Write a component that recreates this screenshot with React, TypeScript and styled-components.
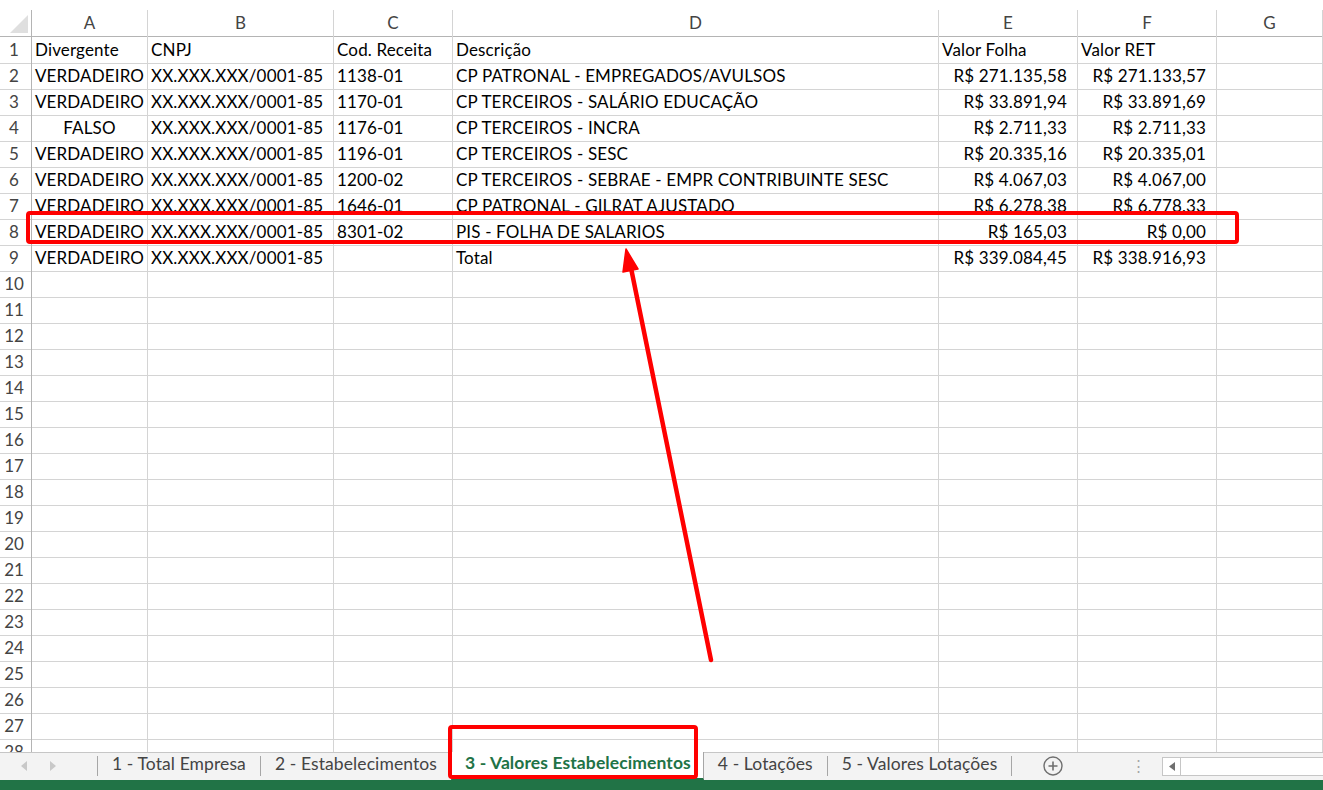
import React from "react";
import styled, { createGlobalStyle } from "styled-components";

const Global = createGlobalStyle`
  html, body { margin: 0; padding: 0; background: #ffffff; overflow: hidden; }
  body { font-family: "Lato", "Liberation Sans", sans-serif; }
  * { box-sizing: border-box; }
`;

const COLS = "32px 116px 186px 119px 486px 139px 139px 1fr";
const GRID = "#d4d4d4";
const HEADLINE = "#b4b4b4";

const Page = styled.div`
  position: relative;
  width: 1323px;
  height: 790px;
  display: flex;
  flex-direction: column;
  padding-top: 10px;
  overflow: hidden;
`;

const Sheet = styled.div`
  flex: 1;
  overflow: hidden;
  display: flex;
  flex-direction: column;
`;

const Row = styled.div`
  display: grid;
  grid-template-columns: ${COLS};
  height: 26px;
  flex: none;
`;

const Corner = styled.div`
  position: relative;
  border-right: 1px solid ${HEADLINE};
  border-bottom: 1px solid ${HEADLINE};
  &::after {
    content: "";
    position: absolute;
    right: 3px;
    bottom: 3px;
    width: 0;
    height: 0;
    border-left: 18px solid transparent;
    border-bottom: 18px solid #dfdfdf;
  }
`;

const ColHead = styled.div`
  border-right: 1px solid ${GRID};
  border-bottom: 1px solid ${HEADLINE};
  color: #444444;
  font-size: 17px;
  line-height: 26px;
  text-align: center;
`;

const RowHead = styled.div`
  border-right: 1px solid ${HEADLINE};
  border-bottom: 1px solid ${GRID};
  color: #444444;
  font-size: 17px;
  line-height: 26px;
  padding-top: 1px;
  text-align: center;
  padding-right: 3px;
`;

const Cell = styled.div<{ $align?: "left" | "center" | "right" }>`
  border-right: 1px solid ${GRID};
  border-bottom: 1px solid ${GRID};
  color: #000000;
  font-size: 17px;
  letter-spacing: 0.15px;
  line-height: 26px;
  padding-top: 1px;
  white-space: nowrap;
  overflow: visible;
  text-align: ${(p) => p.$align ?? "left"};
  padding-left: ${(p) => (p.$align === "left" || !p.$align ? "3px" : "0")};
  padding-right: ${(p) => (p.$align === "right" ? "10px" : "0")};
`;

const TabBar = styled.div`
  height: 28px;
  flex: none;
  background: #f3f3f3;
  border-top: 1px solid #c6c6c6;
  display: flex;
  align-items: stretch;
`;

const Nav = styled.div`
  width: 97px;
  display: flex;
  align-items: center;
  gap: 21px;
  padding-left: 21px;
  padding-bottom: 2px;
`;

const Sep = styled.div`
  width: 1px;
  background: #a6a6a6;
  margin: 3px 0 4px;
`;

const Tab = styled.div<{ $active?: boolean }>`
  display: flex;
  align-items: center;
  padding: ${(p) => (p.$active ? "0 12px 5px 13px" : "0 14px 6px")};
  font-size: 17.5px;
  letter-spacing: 0.1px;
  color: ${(p) => (p.$active ? "#217346" : "#444444")};
  font-weight: ${(p) => (p.$active ? 700 : 400)};
  background: ${(p) => (p.$active ? "#ffffff" : "transparent")};
  border-left: ${(p) => (p.$active ? "1px solid #a6a6a6" : "none")};
  border-right: ${(p) => (p.$active ? "1px solid #a6a6a6" : "none")};
  border-bottom: ${(p) => (p.$active ? "2px solid #217346" : "none")};
  margin-top: -1px;
  white-space: nowrap;
`;

const AddArea = styled.div`
  width: 82px;
  display: flex;
  align-items: center;
  justify-content: center;
  padding-bottom: 2px;
`;

const Dots = styled.div`
  width: 68px;
  display: flex;
  align-items: center;
  justify-content: flex-end;
  padding-right: 16px;
  padding-bottom: 2px;
  color: #a6a6a6;
  font-size: 15px;
`;

const Scroll = styled.div`
  flex: 1;
  margin: 4px 0 4px 0;
  display: flex;
  border: 1px solid #c6c6c6;
  border-right: none;
  background: #ffffff;
`;

const ScrollArrow = styled.div`
  width: 18px;
  border-right: 1px solid #c6c6c6;
  display: flex;
  align-items: center;
  justify-content: center;
`;

const Status = styled.div`
  height: 10px;
  flex: none;
  background: #217346;
`;

const Overlay = styled.svg`
  position: absolute;
  left: 0;
  top: 0;
  pointer-events: none;
`;

type R = [string, string, string, string, string, string];
const rows: R[] = [
  ["Divergente", "CNPJ", "Cod. Receita", "Descrição", "Valor Folha", "Valor RET"],
  ["VERDADEIRO", "XX.XXX.XXX/0001-85", "1138-01", "CP PATRONAL - EMPREGADOS/AVULSOS", "R$ 271.135,58", "R$ 271.133,57"],
  ["VERDADEIRO", "XX.XXX.XXX/0001-85", "1170-01", "CP TERCEIROS - SALÁRIO EDUCAÇÃO", "R$ 33.891,94", "R$ 33.891,69"],
  ["FALSO", "XX.XXX.XXX/0001-85", "1176-01", "CP TERCEIROS - INCRA", "R$ 2.711,33", "R$ 2.711,33"],
  ["VERDADEIRO", "XX.XXX.XXX/0001-85", "1196-01", "CP TERCEIROS - SESC", "R$ 20.335,16", "R$ 20.335,01"],
  ["VERDADEIRO", "XX.XXX.XXX/0001-85", "1200-02", "CP TERCEIROS - SEBRAE - EMPR CONTRIBUINTE SESC", "R$ 4.067,03", "R$ 4.067,00"],
  ["VERDADEIRO", "XX.XXX.XXX/0001-85", "1646-01", "CP PATRONAL - GILRAT AJUSTADO", "R$ 6.278,38", "R$ 6.778,33"],
  ["VERDADEIRO", "XX.XXX.XXX/0001-85", "8301-02", "PIS - FOLHA DE SALARIOS", "R$ 165,03", "R$ 0,00"],
  ["VERDADEIRO", "XX.XXX.XXX/0001-85", "", "Total", "R$ 339.084,45", "R$ 338.916,93"],
];

const letters = ["A", "B", "C", "D", "E", "F", "G"];

export default function App() {
  const total = 28;
  return (
    <>
      <Global />
      <Page>
        <Sheet>
          <Row>
            <Corner />
            {letters.map((l) => (
              <ColHead key={l}>{l}</ColHead>
            ))}
          </Row>
          {Array.from({ length: total }, (_, i) => {
            const d = rows[i];
            const header = i === 0;
            return (
              <Row key={i}>
                <RowHead>{i + 1}</RowHead>
                <Cell $align={d && !header ? "center" : "left"}>{d ? d[0] : ""}</Cell>
                <Cell>{d ? d[1] : ""}</Cell>
                <Cell>{d ? d[2] : ""}</Cell>
                <Cell>{d ? d[3] : ""}</Cell>
                <Cell $align={d && !header ? "right" : "left"}>{d ? d[4] : ""}</Cell>
                <Cell $align={d && !header ? "right" : "left"}>{d ? d[5] : ""}</Cell>
                <Cell />
              </Row>
            );
          })}
        </Sheet>
        <TabBar>
          <Nav>
            <svg width="7" height="10" viewBox="0 0 7 10"><path d="M6 0 L0 5 L6 10 Z" fill="#c8c8c8" /></svg>
            <svg width="7" height="10" viewBox="0 0 7 10"><path d="M1 0 L7 5 L1 10 Z" fill="#c8c8c8" /></svg>
          </Nav>
          <Sep />
          <Tab>1 - Total Empresa</Tab>
          <Sep />
          <Tab>2 - Estabelecimentos</Tab>
          <Tab $active>3 - Valores Estabelecimentos</Tab>
          <Tab>4 - Lotações</Tab>
          <Sep />
          <Tab>5 - Valores Lotações</Tab>
          <Sep />
          <AddArea>
            <svg width="20" height="20" viewBox="0 0 20 20">
              <circle cx="10" cy="10" r="9" fill="none" stroke="#6f6f6f" strokeWidth="1.4" />
              <path d="M10 5.5 V14.5 M5.5 10 H14.5" stroke="#6f6f6f" strokeWidth="1.6" />
            </svg>
          </AddArea>
          <Dots>⋮</Dots>
          <Scroll>
            <ScrollArrow>
              <svg width="6" height="9" viewBox="0 0 6 9"><path d="M6 0 L0 4.5 L6 9 Z" fill="#6f6f6f" /></svg>
            </ScrollArrow>
          </Scroll>
        </TabBar>
        <Status />
        <Overlay width="1323" height="790" viewBox="0 0 1323 790">
          <rect x="28" y="213" width="1209" height="29" rx="2" fill="none" stroke="#ff0000" strokeWidth="4" />
          <rect x="450" y="727" width="246" height="50" rx="2" fill="none" stroke="#ff0000" strokeWidth="4" />
          <line x1="711" y1="660" x2="631" y2="268" stroke="#ff0000" strokeWidth="4.5" strokeLinecap="round" />
          <polygon points="626,249 638,269 623,272" fill="#ff0000" stroke="#ff0000" strokeWidth="1.5" strokeLinejoin="round" />
        </Overlay>
      </Page>
    </>
  );
}
